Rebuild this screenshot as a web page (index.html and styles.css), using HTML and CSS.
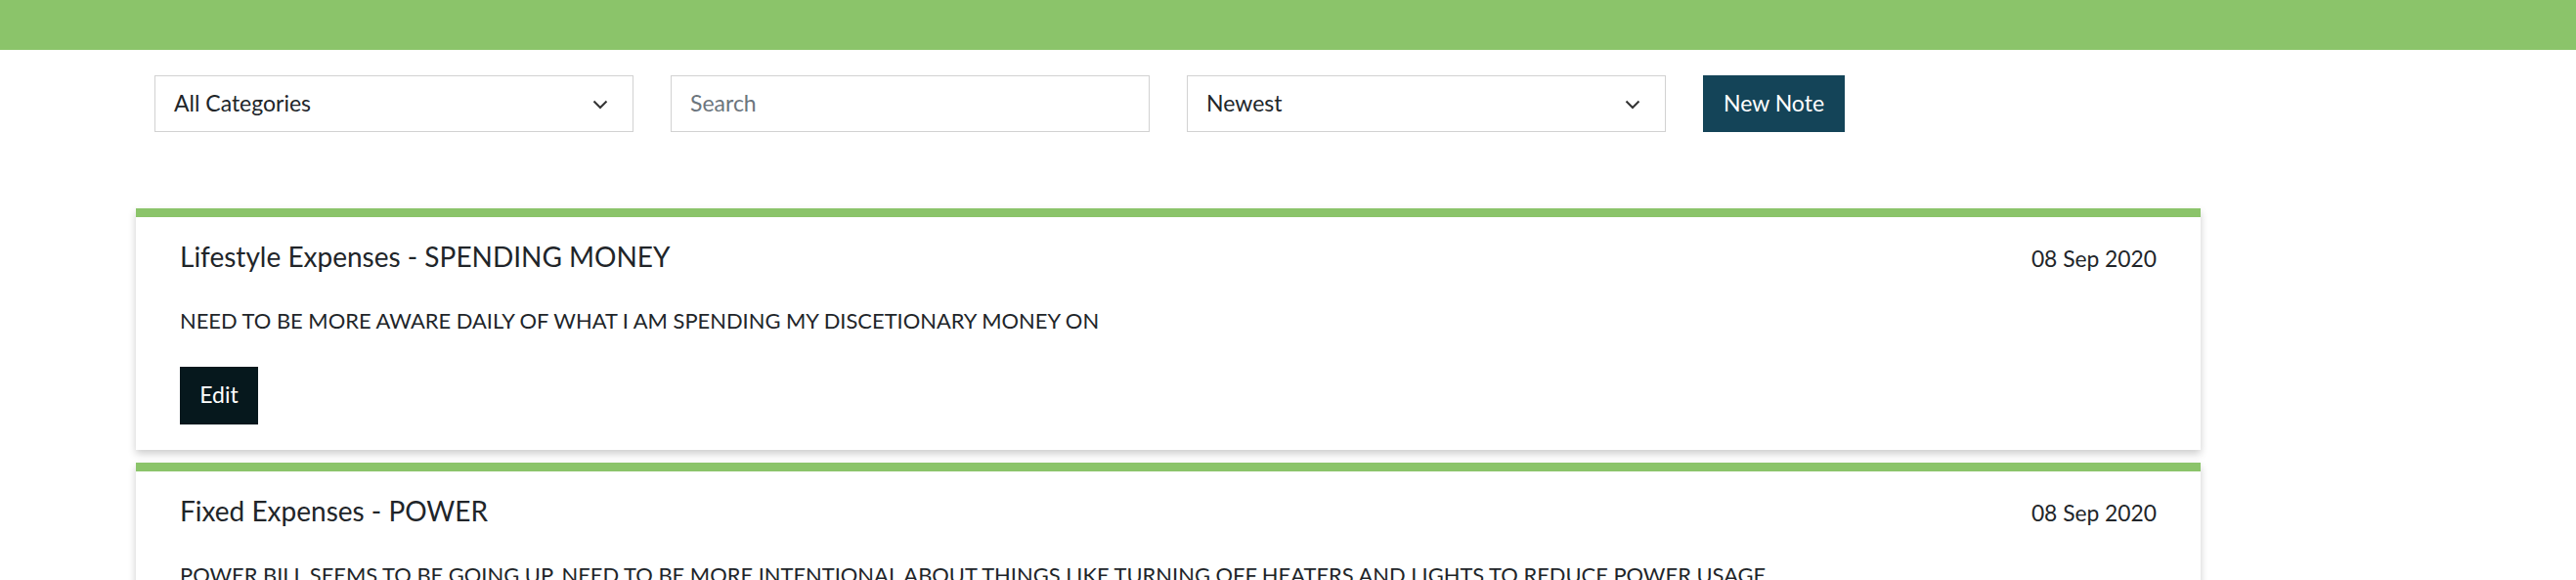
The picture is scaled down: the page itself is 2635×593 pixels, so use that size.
FILE: index.html
```html
<!DOCTYPE html>
<html>
    <head>
        <link rel="stylesheet" href="styles.css">
    </head>
    <body>
        <div class="topbar"></div>

        <div class="page">
            <div class="toolbar">
                <div class="field select">
                    <span>All Categories</span>
                    <svg class="chevron" width="16" height="10" viewBox="0 0 16 10"><path d="M1.5 1.5 L8 8 L14.5 1.5" fill="none" stroke="#333" stroke-width="2"/></svg>
                </div>
                <div class="field search">
                    <span class="placeholder">Search</span>
                </div>
                <div class="field select">
                    <span>Newest</span>
                    <svg class="chevron" width="16" height="10" viewBox="0 0 16 10"><path d="M1.5 1.5 L8 8 L14.5 1.5" fill="none" stroke="#333" stroke-width="2"/></svg>
                </div>
                <button class="btn newNote">New Note</button>
            </div>

            <ul class="notes">
                <li class="note">
                    <div class="noteHead">
                        <h2 class="noteTitle">Lifestyle Expenses - SPENDING MONEY</h2>
                        <span class="date">08 Sep 2020</span>
                    </div>
                    <p class="noteBody">NEED TO BE MORE AWARE DAILY OF WHAT I AM SPENDING MY DISCETIONARY MONEY ON</p>
                    <button class="btn edit">Edit</button>
                </li>
                <li class="note">
                    <div class="noteHead">
                        <h2 class="noteTitle">Fixed Expenses - POWER</h2>
                        <span class="date">08 Sep 2020</span>
                    </div>
                    <p class="noteBody">POWER BILL SEEMS TO BE GOING UP, NEED TO BE MORE INTENTIONAL ABOUT THINGS LIKE TURNING OFF HEATERS AND LIGHTS TO REDUCE POWER USAGE</p>
                    <button class="btn edit">Edit</button>
                </li>
            </ul>
        </div>
    </body>
</html>
```

FILE: styles.css
```css
body {
    margin: 0;
    font-family: Lato, "Open Sans", sans-serif;
    background: white;
    color: #212529;
}

.topbar {
    height: 51px;
    background: #8bc46a;
}

.page {
    width: 2112px;
    margin-left: 139px;
}

.toolbar {
    display: flex;
    gap: 38px;
    margin-top: 26px;
    padding-left: 19px;
}

.field {
    box-sizing: border-box;
    width: 490px;
    height: 58px;
    border: 1px solid #d2d2d2;
    padding: 0 25px 3px 19px;
    display: flex;
    align-items: center;
    justify-content: space-between;
    font-size: 23px;
}

.placeholder {
    color: #6c757d;
}

.chevron {
    display: block;
    margin-top: 5px;
}

.btn {
    font-family: Lato, "Open Sans", sans-serif;
    font-size: 23px;
    color: white;
    border: none;
    padding: 0 0 3px;
    cursor: pointer;
}

.newNote {
    width: 145px;
    height: 58px;
    background: #144458;
}

.notes {
    list-style: none;
    margin: 78px 0 0;
    padding: 0;
}

.note {
    border-top: 9px solid #8bc46a;
    padding: 26px 45px 26px 45px;
    margin-bottom: 13px;
    box-shadow: 0 4px 8px rgba(0, 0, 0, 0.2);
    background: white;
}

.noteHead {
    display: flex;
    justify-content: space-between;
    align-items: center;
    margin-bottom: 32px;
}

.noteTitle {
    margin: -2px 0 2px;
    font-size: 28px;
    font-weight: normal;
    line-height: 32px;
}

.date {
    font-size: 22.8px;
}

.noteBody {
    margin: 0 0 31px;
    font-size: 21.9px;
    line-height: 32px;
}

.edit {
    width: 80px;
    height: 59px;
    background: #06181d;
    display: block;
}
```
